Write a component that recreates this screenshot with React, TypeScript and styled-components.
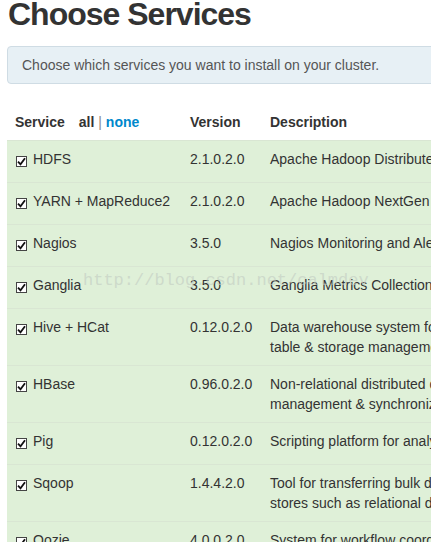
import { FC } from "react";
import styled, { createGlobalStyle } from "styled-components";

const GlobalStyle = createGlobalStyle`
  html, body {
    margin: 0;
    padding: 0;
    background: #fff;
    overflow: hidden;
  }
  body {
    font-family: "Liberation Sans", Arial, sans-serif;
    font-size: 14px;
    line-height: 20px;
    color: #333;
  }
`;

interface Service {
  name: string;
  version: string;
  description: string[];
}

const services: Service[] = [
  { name: "HDFS", version: "2.1.0.2.0", description: ["Apache Hadoop Distributed File System"] },
  { name: "YARN + MapReduce2", version: "2.1.0.2.0", description: ["Apache Hadoop NextGen MapReduce (YARN)"] },
  { name: "Nagios", version: "3.5.0", description: ["Nagios Monitoring and Alerting system"] },
  { name: "Ganglia", version: "3.5.0", description: ["Ganglia Metrics Collection system"] },
  {
    name: "Hive + HCat",
    version: "0.12.0.2.0",
    description: [
      "Data warehouse system for ad-hoc queries & analysis of large datasets and",
      "table & storage management service",
    ],
  },
  {
    name: "HBase",
    version: "0.96.0.2.0",
    description: [
      "Non-relational distributed database and centralized service for configuration",
      "management & synchronization",
    ],
  },
  { name: "Pig", version: "0.12.0.2.0", description: ["Scripting platform for analyzing large datasets"] },
  {
    name: "Sqoop",
    version: "1.4.4.2.0",
    description: [
      "Tool for transferring bulk data between Apache Hadoop and structured data",
      "stores such as relational databases",
    ],
  },
  {
    name: "Oozie",
    version: "4.0.0.2.0",
    description: [
      "System for workflow coordination and execution of Apache Hadoop jobs.",
      "This also includes the installation of the optional Oozie Web Console",
    ],
  },
];

const Page = styled.div`
  position: relative;
  padding-left: 7px;
  width: 960px;
`;

const Title = styled.h2`
  margin: -4px 0 0 1px;
  font-size: 32px;
  line-height: 36px;
  font-weight: bold;
  letter-spacing: -1px;
  color: #333;
`;

const Alert = styled.div`
  margin-top: 14px;
  padding: 8px 14px;
  background: #e7f0f5;
  border: 1px solid #cfdce4;
  border-radius: 4px;
  color: #555;
`;

const Table = styled.div`
  margin-top: 20px;
  width: 940px;
`;

const Row = styled.div<{ $head?: boolean }>`
  display: grid;
  grid-template-columns: 175px 80px 1fr;
  box-sizing: border-box;
  min-height: ${(p) => (p.$head ? "36px" : "42px")};
  border-top: ${(p) => (p.$head ? "none" : "1px solid #d9e6d3")};
  background: ${(p) => (p.$head ? "transparent" : "#dff0d8")};
  font-weight: ${(p) => (p.$head ? "bold" : "normal")};
`;

const Cell = styled.div`
  padding: 8px;
  white-space: nowrap;
`;

const ServiceCell = styled(Cell)`
  display: flex;
  align-items: flex-start;
  gap: 6px;
`;

const Box = styled.span`
  flex: none;
  width: 11px;
  height: 11px;
  margin: 7px 0 0 1px;
  box-sizing: border-box;
  border: 1px solid #444;
  background: #fff;
  display: flex;
  align-items: center;
  justify-content: center;
`;

const Toggle = styled.span`
  margin-left: 14px;
`;

const Sep = styled.span`
  font-weight: normal;
  color: #888;
`;

const Link = styled.span`
  color: #0088cc;
`;

// csdn watermark lying over the Ganglia row
const Watermark = styled.div`
  position: absolute;
  left: 83px;
  top: 273px;
  font-family: "Liberation Mono", "Courier New", monospace;
  font-size: 17px;
  line-height: 24px;
  color: rgba(195, 205, 195, 0.65);
  pointer-events: none;
  white-space: nowrap;
`;

const Check: FC = () => (
  <Box>
    <svg width="9" height="9" viewBox="0 0 9 9">
      <path d="M1 4.6 L3.5 7.3 L8 1.3" fill="none" stroke="#111" strokeWidth="1.8" />
    </svg>
  </Box>
);

const App: FC = () => {
  return (
    <Page>
      <GlobalStyle />
      <Title>Choose Services</Title>
      <Alert>Choose which services you want to install on your cluster.</Alert>
      <Table>
        <Row $head>
          <Cell>
            Service
            <Toggle>
              all <Sep>|</Sep> <Link>none</Link>
            </Toggle>
          </Cell>
          <Cell>Version</Cell>
          <Cell>Description</Cell>
        </Row>
        {services.map((s) => (
          <Row key={s.name}>
            <ServiceCell>
              <Check />
              {s.name}
            </ServiceCell>
            <Cell>{s.version}</Cell>
            <Cell>
              {s.description.map((line) => (
                <div key={line}>{line}</div>
              ))}
            </Cell>
          </Row>
        ))}
      </Table>
      <Watermark>http://blog.csdn.net/calmdev</Watermark>
    </Page>
  );
};

export default App;
